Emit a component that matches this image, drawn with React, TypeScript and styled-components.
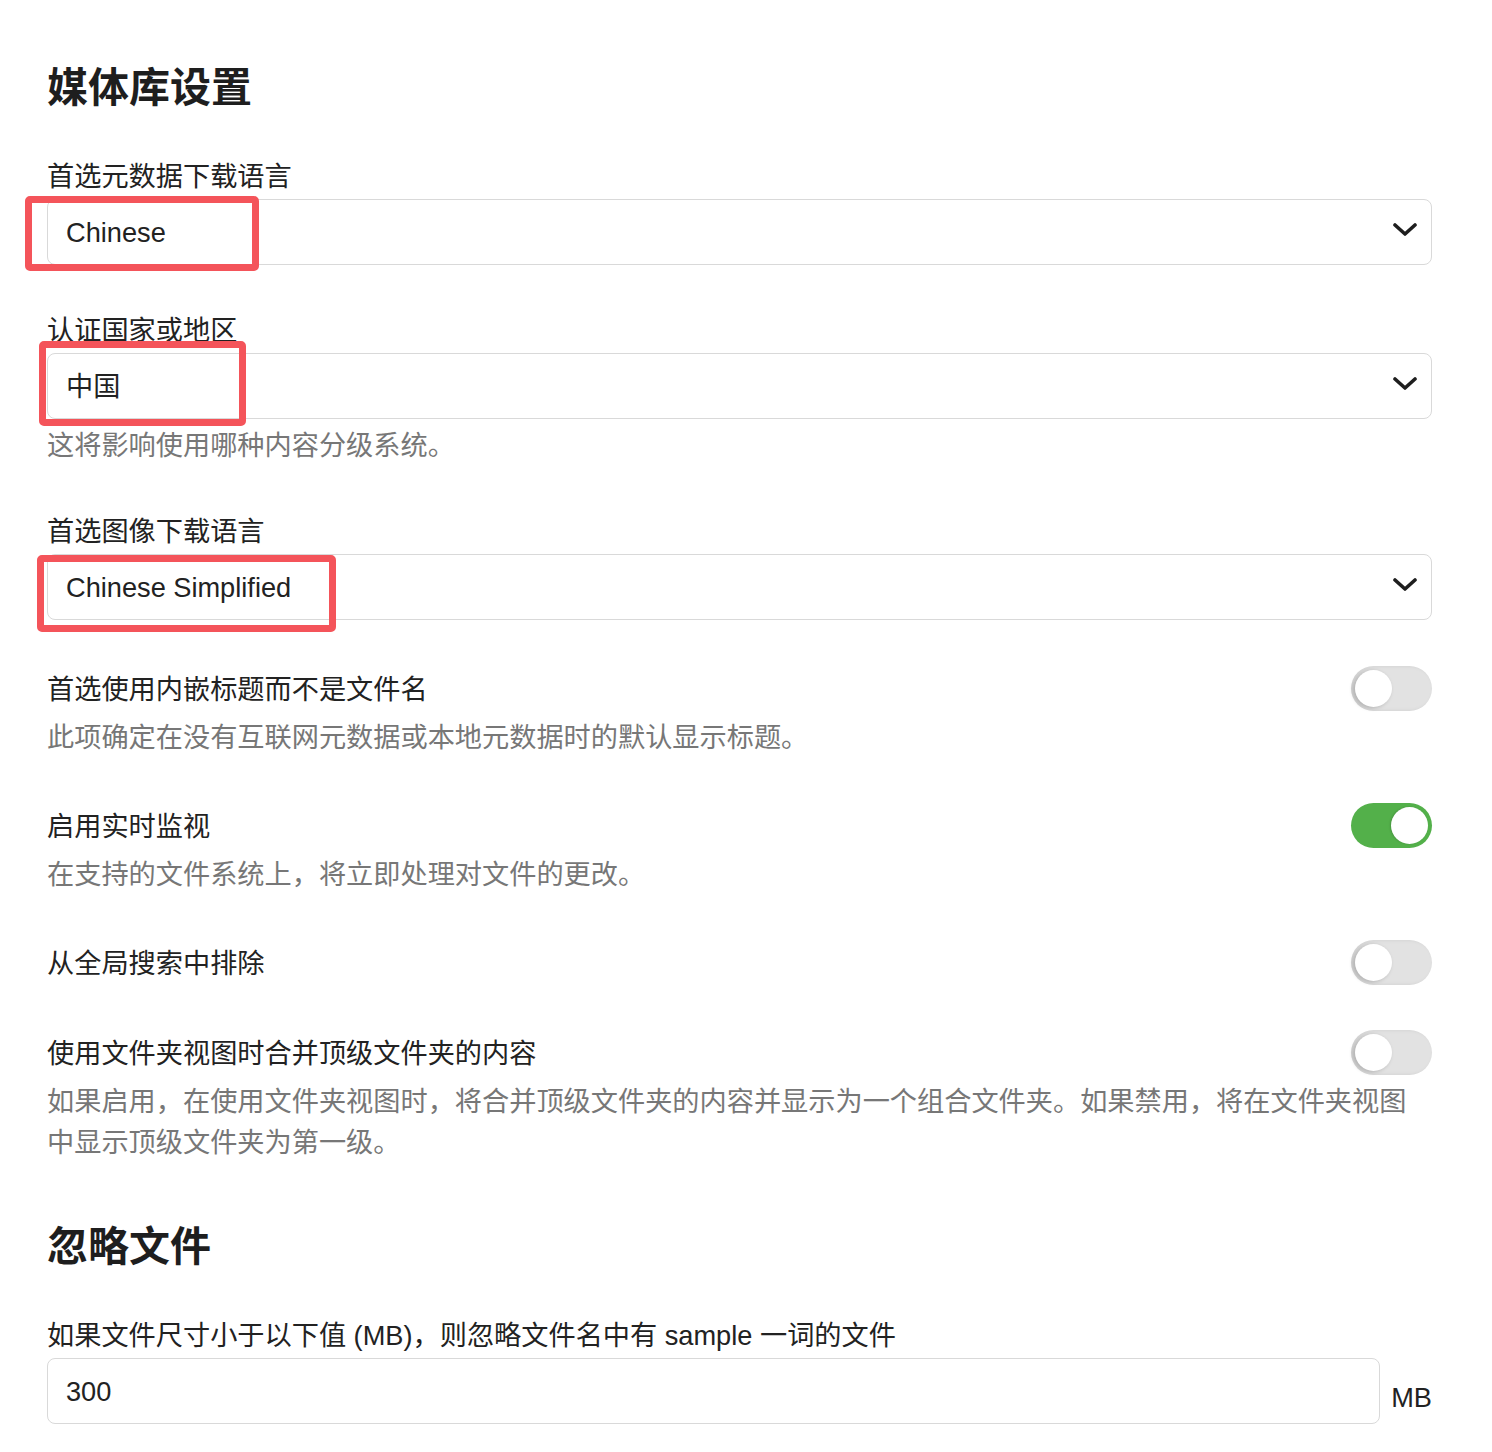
import styled, { createGlobalStyle, css } from "styled-components";

const GlobalStyle = createGlobalStyle`
  html, body {
    margin: 0;
    padding: 0;
    background: #ffffff;
  }
  body {
    font-family: "Liberation Sans", "Noto Sans CJK SC", sans-serif;
    color: #222222;
    -webkit-font-smoothing: antialiased;
  }
`;

interface SelectFieldProps {
  label: string;
  value: string;
  help?: string;
  mark: { left: number; top: number; width: number; height: number };
}

function SelectField(props: SelectFieldProps) {
  const { label, value, help, mark } = props;
  return (
    <Block>
      <Label>{label}</Label>
      <SelectBox>
        <SelectValue>{value}</SelectValue>
        <Chevron viewBox="0 0 24 16">
          <polyline points="2,2 12,11 22,2" />
        </Chevron>
        <Mark
          style={{
            left: mark.left,
            top: mark.top,
            width: mark.width,
            height: mark.height,
          }}
        />
      </SelectBox>
      {help && <Help>{help}</Help>}
    </Block>
  );
}

interface ToggleFieldProps {
  label: string;
  help?: string;
  checked: boolean;
}

function ToggleField(props: ToggleFieldProps) {
  const { label, help, checked } = props;
  return (
    <ToggleBlock>
      <ToggleRow>
        <Label>{label}</Label>
        <Switch checked={checked}>
          <Knob checked={checked} />
        </Switch>
      </ToggleRow>
      {help && <ToggleHelp>{help}</ToggleHelp>}
    </ToggleBlock>
  );
}

export default function App() {
  return (
    <>
      <GlobalStyle />
      <Page>
        <Heading>媒体库设置</Heading>
        <SelectField
          label="首选元数据下载语言"
          value="Chinese"
          mark={{ left: -23, top: -4, width: 234, height: 75 }}
        />
        <SelectField
          label="认证国家或地区"
          value="中国"
          help="这将影响使用哪种内容分级系统。"
          mark={{ left: -9, top: -13, width: 207, height: 85 }}
        />
        <SelectField
          label="首选图像下载语言"
          value="Chinese Simplified"
          mark={{ left: -11, top: 0, width: 299, height: 77 }}
        />
        <ToggleField
          label="首选使用内嵌标题而不是文件名"
          help="此项确定在没有互联网元数据或本地元数据时的默认显示标题。"
          checked={false}
        />
        <ToggleField
          label="启用实时监视"
          help="在支持的文件系统上，将立即处理对文件的更改。"
          checked={true}
        />
        <ToggleField label="从全局搜索中排除" checked={false} />
        <ToggleField
          label="使用文件夹视图时合并顶级文件夹的内容"
          help="如果启用，在使用文件夹视图时，将合并顶级文件夹的内容并显示为一个组合文件夹。如果禁用，将在文件夹视图中显示顶级文件夹为第一级。"
          checked={false}
        />
        <SubHeading>忽略文件</SubHeading>
        <Label>如果文件尺寸小于以下值 (MB)，则忽略文件名中有 sample 一词的文件</Label>
        <InputRow>
          <NumberBox>300</NumberBox>
          <Unit>MB</Unit>
        </InputRow>
      </Page>
    </>
  );
}

const Page = styled.div`
  padding: 64px 60px 30px 47px;
  font-size: 27.2px;
  line-height: 41px;
`;

const headingMixin = css`
  margin: 0;
  font-size: 41px;
  line-height: 49px;
  font-weight: 700;
  color: #1e1e1e;
`;

const Heading = styled.h1`
  ${headingMixin};
  margin-bottom: 43px;
`;

const SubHeading = styled.h2`
  ${headingMixin};
  margin-top: 60px;
  margin-bottom: 43px;
`;

const Block = styled.div`
  margin-bottom: 45px;
`;

const ToggleBlock = styled.div`
  margin-bottom: 44px;
`;

const Label = styled.div`
  color: #222222;
  margin-bottom: 2px;
`;

const SelectBox = styled.div`
  position: relative;
  height: 66px;
  box-sizing: border-box;
  border: 1px solid #d9d9d9;
  border-radius: 8px;
  background: #ffffff;
  display: flex;
  align-items: center;
  justify-content: space-between;
  padding: 0 14px 0 18px;
`;

const SelectValue = styled.span`
  color: #222222;
`;

const Chevron = styled.svg`
  width: 24px;
  height: 16px;
  margin-bottom: 3px;
  fill: none;
  stroke: #1e1e1e;
  stroke-width: 3.6;
  stroke-linecap: round;
  stroke-linejoin: round;
`;

const Mark = styled.div`
  position: absolute;
  box-sizing: border-box;
  border: 7px solid #f4545a;
  border-radius: 5px;
  pointer-events: none;
`;

const Help = styled.div`
  color: #777777;
  margin-top: 6px;
`;

const ToggleRow = styled.div`
  display: flex;
  align-items: center;
  justify-content: space-between;
  height: 46px;

  ${Label} {
    margin-bottom: 0;
    margin-top: 3px;
  }
`;

const ToggleHelp = styled(Help)`
  margin-top: 6px;
  padding-right: 8px;
`;

interface SwitchProps {
  checked: boolean;
}

const Switch = styled.div<SwitchProps>`
  position: relative;
  flex: none;
  width: 81px;
  height: 45px;
  border-radius: 23px;
  background: ${(props) => (props.checked ? "#53b04a" : "#e2e2e2")};
  box-shadow: ${(props) =>
    props.checked ? "none" : "inset 2px 0 4px rgba(0, 0, 0, 0.08)"};
`;

const Knob = styled.div<SwitchProps>`
  position: absolute;
  top: 4px;
  left: ${(props) => (props.checked ? "40px" : "4px")};
  width: 37px;
  height: 37px;
  border-radius: 50%;
  background: #ffffff;
  box-shadow: ${(props) =>
    props.checked
      ? "-1px 0 2px rgba(0, 0, 0, 0.15)"
      : "-2px 1px 4px rgba(0, 0, 0, 0.22)"};
`;

const InputRow = styled.div`
  display: flex;
  align-items: flex-end;
  gap: 11px;
`;

const NumberBox = styled.div`
  flex: 1;
  height: 66px;
  box-sizing: border-box;
  border: 1px solid #d9d9d9;
  border-radius: 8px;
  display: flex;
  align-items: center;
  padding-left: 18px;
  color: #222222;
`;

const Unit = styled.span`
  padding-bottom: 6px;
  color: #222222;
`;
